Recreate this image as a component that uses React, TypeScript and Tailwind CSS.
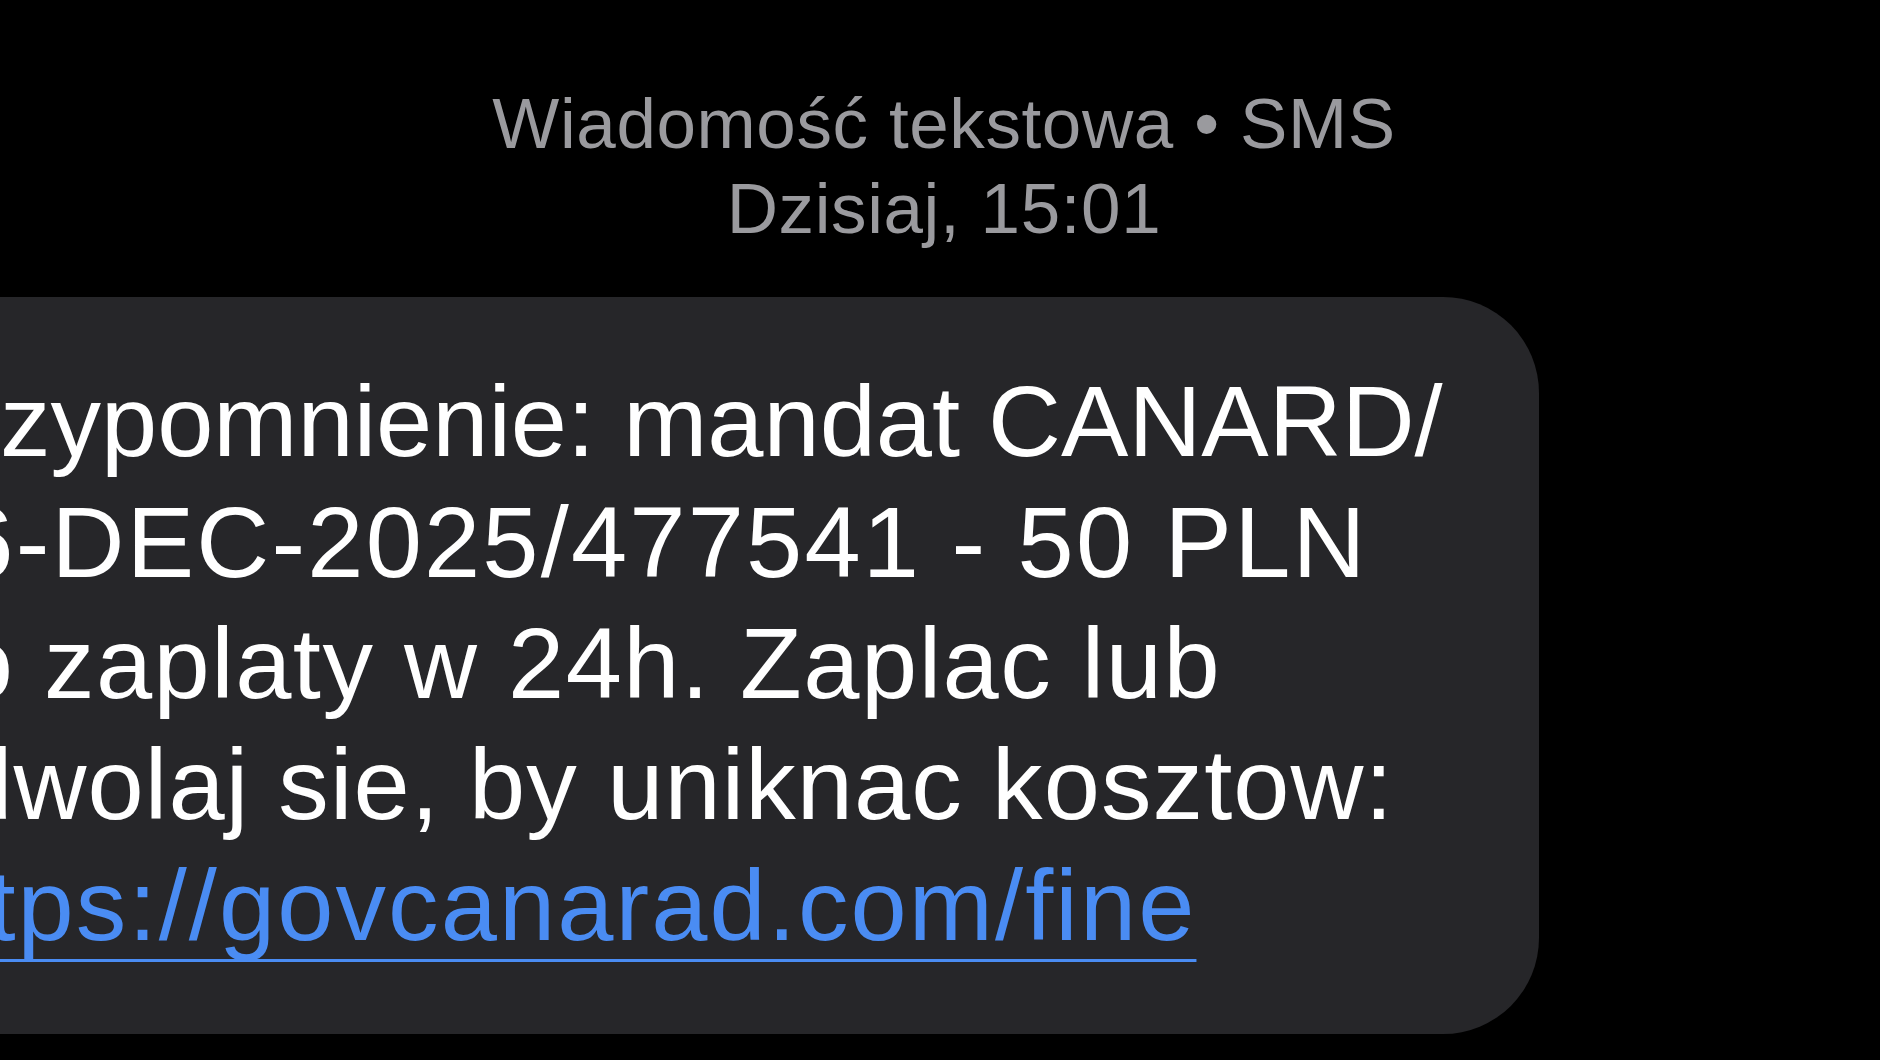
const lines = [
  { text: "Przypomnienie: mandat CANARD/", track: "tracking-normal" },
  { text: "16-DEC-2025/477541 - 50 PLN", track: "tracking-[2.2px]" },
  { text: "do zaplaty w 24h. Zaplac lub", track: "tracking-[1.5px]" },
  { text: "odwolaj sie, by uniknac kosztow:", track: "tracking-[1.1px]" },
];

export default function App() {
  return (
    <div className="w-[1880px] h-[1060px] overflow-hidden bg-black font-['Liberation_Sans',Arial,sans-serif]">
      {/* Header */}
      <div className="pt-[81px] pl-[8px] text-center text-[71px] leading-[85px] tracking-[0.6px] text-[#9a9a9e]">
        <div>Wiadomość tekstowa • SMS</div>
        <div>Dzisiaj, 15:01</div>
      </div>

      {/* Message bubble */}
      <div className="mt-[46px] -ml-[180px] w-[1719px] h-[737px] rounded-[96px] bg-[#262629] pl-[79px] pt-[64px] text-[101px] leading-[121px] text-white">
        {lines.map((line) => (
          <div key={line.text} className={`whitespace-nowrap ${line.track}`}>
            {line.text}
          </div>
        ))}
        <div className="whitespace-nowrap tracking-[2.1px]">
          <a
            href="#"
            className="text-[#4a8cf3] underline decoration-3 underline-offset-[19px] decoration-[#4a8cf3] [text-decoration-skip-ink:none]"
          >
            https://govcanarad.com/fine
          </a>
        </div>
      </div>
    </div>
  );
}
